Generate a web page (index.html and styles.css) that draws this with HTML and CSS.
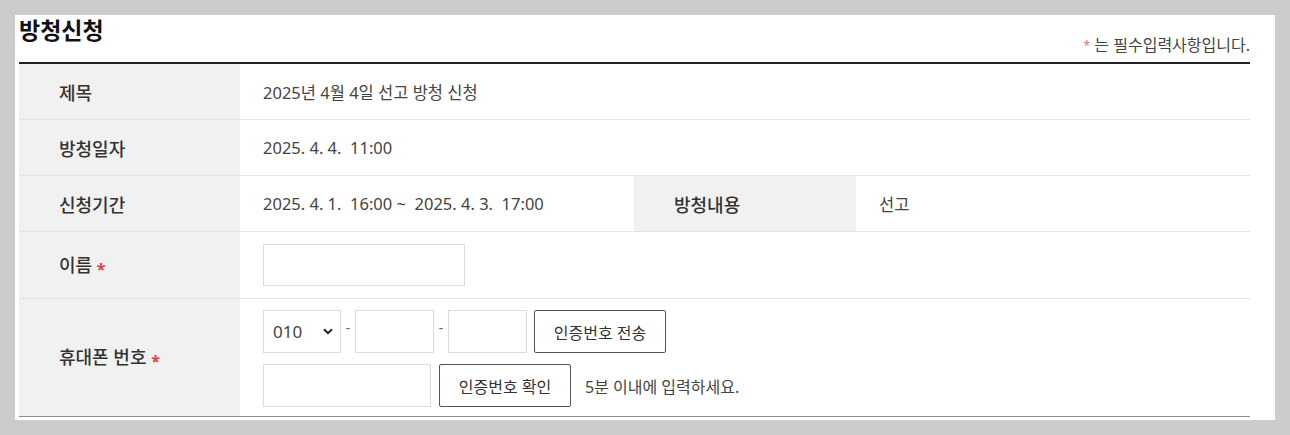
FILE: index.html
```html
<!DOCTYPE html>
<html lang="ko">
<head>
<meta charset="utf-8">
<title>방청신청</title>
<link rel="stylesheet" href="styles.css">
</head>
<body>
<div class="panel">
  <div class="head">
    <h2 class="title">방청신청</h2>
    <p class="note"><span class="note-star">*</span> 는 필수입력사항입니다.</p>
  </div>
  <table class="form">
    <colgroup>
      <col class="c-th"><col class="c-td"><col class="c-th2"><col class="c-td">
    </colgroup>
    <tbody>
      <tr class="r-info">
        <th>제목</th>
        <td colspan="3">2025년 4월 4일 선고 방청 신청</td>
      </tr>
      <tr class="r-info">
        <th>방청일자</th>
        <td colspan="3">2025. 4. 4.&nbsp; 11:00</td>
      </tr>
      <tr class="r-info">
        <th>신청기간</th>
        <td>2025. 4. 1.&nbsp; 16:00 ~&nbsp; 2025. 4. 3.&nbsp; 17:00</td>
        <th>방청내용</th>
        <td>선고</td>
      </tr>
      <tr class="r-name">
        <th>이름 <span class="req">*</span></th>
        <td colspan="3"><input type="text" class="inp inp-name"></td>
      </tr>
      <tr class="r-phone">
        <th>휴대폰 번호 <span class="req">*</span></th>
        <td colspan="3">
          <div class="line">
            <span class="sel-wrap">
              <select class="sel"><option>010</option></select>
              <svg class="chev" width="10" height="7" viewBox="0 0 10 7"><path d="M1 1.2 L5 5.2 L9 1.2" fill="none" stroke="#222" stroke-width="2"/></svg>
            </span>
            <span class="dash">-</span>
            <input type="text" class="inp inp-ph">
            <span class="dash">-</span>
            <input type="text" class="inp inp-ph">
            <button class="btn btn-send" type="button">인증번호 전송</button>
          </div>
          <div class="line line2">
            <input type="text" class="inp inp-code">
            <button class="btn" type="button">인증번호 확인</button>
            <span class="hint">5분 이내에 입력하세요.</span>
          </div>
        </td>
      </tr>
    </tbody>
  </table>
</div>
</body>
</html>
```
FILE: styles.css
```css
html, body {
  margin: 0;
  padding: 0;
}
body {
  background: #cccccc;
  padding: 15px;
  font-family: "Noto Sans", "Noto Sans CJK KR", sans-serif;
  color: #444;
}
.panel {
  background: #ffffff;
  padding: 0 25px 3px 4px;
  height: 402px;
}
.head {
  display: flex;
  justify-content: space-between;
  align-items: flex-end;
  height: 47px;
}
.title {
  margin: 0;
  align-self: flex-start;
  font-size: 23px;
  line-height: 30px;
  font-weight: 700;
  color: #111;
}
.note {
  margin: 0 0 6px 0;
  font-size: 16px;
  line-height: 20px;
  color: #444;
}
.note-star {
  color: #e86a6a;
  font-size: 12px;
  vertical-align: 1px;
}
.form {
  width: 1231px;
  border-collapse: collapse;
  table-layout: fixed;
  border-top: 2px solid #222;
  border-bottom: 1px solid #8c8c8c;
}
.c-th { width: 221px; }
.c-th2 { width: 222px; }
.c-td { width: 394px; }
.form tr { border-bottom: 1px solid #e3e3e3; }
.form tr:last-child { border-bottom: none; }
.form th {
  background: #f1f1f1;
  text-align: left;
  padding: 0 0 0 40px;
  font-size: 18px;
  font-weight: 500;
  color: #333;
}
.form td {
  padding: 0 23px;
  font-size: 16.5px;
  color: #444;
  white-space: nowrap;
}
.r-info th { height: 55px; }
.r-name th { height: 66px; }
.r-phone th { height: 117px; }
.r-phone td { padding-top: 11px; padding-bottom: 9px; }
.req {
  color: #e23b3b;
  font-weight: 700;
  font-size: 16px;
  vertical-align: -3px;
}
.inp {
  box-sizing: border-box;
  height: 42px;
  border: 1px solid #dcdcdc;
  background: #fff;
  margin: 0;
  padding: 0 8px;
  font-family: inherit;
  display: block;
}
.inp-name { width: 202px; }
.inp-ph { width: 79px; height: 43px; }
.inp-code { width: 168px; height: 43px; }
.line {
  display: flex;
  align-items: center;
  height: 43px;
}
.line2 { margin-top: 11px; }
.sel-wrap {
  position: relative;
  display: block;
  width: 78px;
  height: 43px;
}
.sel {
  appearance: none;
  -webkit-appearance: none;
  box-sizing: border-box;
  width: 78px;
  height: 43px;
  border: 1px solid #dcdcdc;
  border-radius: 0;
  background: #fff;
  padding: 0 0 0 9px;
  font-family: inherit;
  font-size: 17px;
  color: #444;
  margin: 0;
}
.chev {
  position: absolute;
  left: 60px;
  top: 18px;
}
.dash {
  width: 14px;
  text-align: center;
  color: #666;
  font-size: 14px;
  margin-top: -8px;
}
.btn {
  box-sizing: border-box;
  width: 132px;
  height: 43px;
  border: 1px solid #555;
  border-radius: 2px;
  background: #fff;
  font-family: inherit;
  font-size: 16px;
  color: #333;
  padding: 0;
  margin: 0 0 0 8px;
  cursor: pointer;
}
.btn-send { margin-left: 7px; }
.hint {
  margin-left: 14px;
  font-size: 16px;
  color: #444;
}
```
